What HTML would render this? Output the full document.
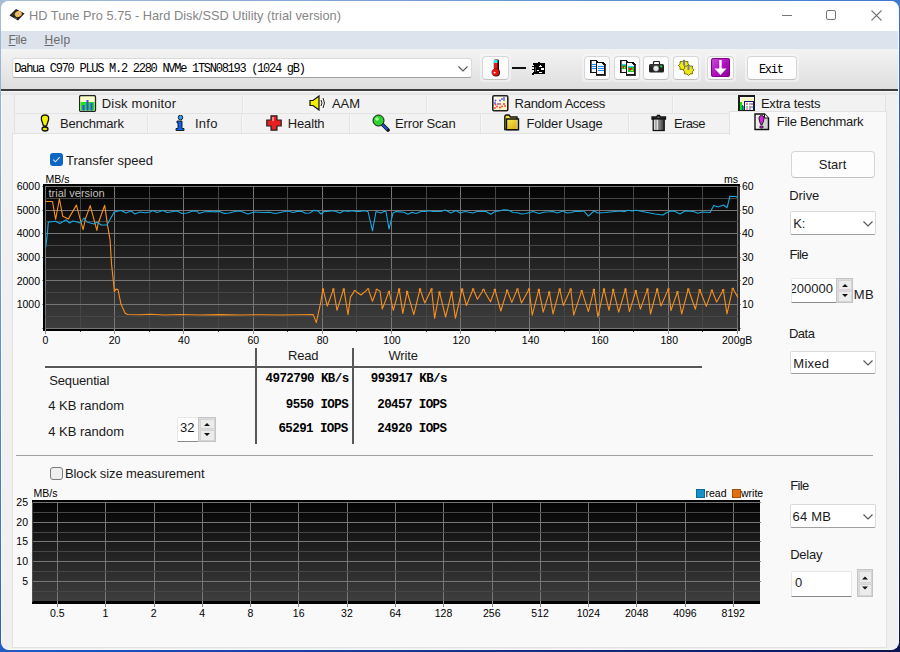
<!DOCTYPE html>
<html><head><meta charset="utf-8">
<style>
*{margin:0;padding:0;box-sizing:border-box}
html,body{width:900px;height:652px;overflow:hidden}
body{background:linear-gradient(150deg,#a8bed6 0%,#3a78d0 45%,#1a50c0 60%,#0a1450 100%);font-family:"Liberation Sans",sans-serif;position:relative}
.abs{position:absolute}
.lbl{white-space:nowrap;line-height:1.2}
.win{position:absolute;left:1px;top:1px;width:898px;height:649px;background:#f0f0f0;border-radius:8px;overflow:hidden;border:1px solid #fafafa;border-top:none}
.combo{position:absolute;background:#fff;border:1px solid #dadada;border-bottom-color:#a0a0a0;border-radius:3px}
.btn{position:absolute;background:#fdfdfd;border:1px solid #d6d6d6;border-bottom-color:#c0c0c0;border-radius:4px}
</style></head><body>
<div class="win"></div>
<div class="abs" style="left:1px;top:1px;width:897px;height:30px;background:#fff;border-radius:8px 8px 0 0"></div>
<svg class="abs" style="left:9px;top:7px" width="16" height="15" viewBox="0 0 16 15">
<path d="M0.5 8.5 L7 2 L15.5 6.5 L9 13.5 Z" fill="#1a1a1a"/><path d="M2 8.3 L7 3.2 L9.5 4.5 L4.5 10Z" fill="#2e2e2e"/>
<ellipse cx="9.3" cy="7" rx="3.6" ry="3" fill="#f2b24a" transform="rotate(-30 9.3 7)"/><ellipse cx="9.3" cy="7" rx="2" ry="1.6" fill="#f8cc78" transform="rotate(-30 9.3 7)"/><circle cx="9.3" cy="6.9" r="0.9" fill="#9aa0c0"/>
<path d="M5 10.5 L8 12" stroke="#777" stroke-width="1"/></svg>
<div class="abs" style="left:782px;top:15px;width:10px;height:1px;background:#777"></div>
<div class="abs" style="left:826px;top:10px;width:10px;height:10px;border:1px solid #777;border-radius:2px"></div>
<svg class="abs" style="left:871px;top:10px" width="11" height="11" viewBox="0 0 11 11"><path d="M0.5 0.5 L10.5 10.5 M10.5 0.5 L0.5 10.5" stroke="#777" stroke-width="1.1"/></svg>
<div class="abs" style="left:1px;top:31px;width:897px;height:18px;background:#dde3ec"></div>
<div class="abs" style="left:1px;top:49px;width:897px;height:40px;background:linear-gradient(#f3f3f3,#dedede)"></div>
<div class="abs" style="left:1px;top:89px;width:897px;height:2px;background:#3c3c3c"></div>
<div class="abs" style="left:1px;top:91px;width:897px;height:1px;background:#fafafa"></div>
<div class="combo" style="left:12px;top:58px;width:460px;height:20px"></div>
<svg class="abs" style="left:458px;top:66px" width="10" height="6" viewBox="0 0 10 6"><path d="M0.5 0.5 L5 5 L9.5 0.5" fill="none" stroke="#555" stroke-width="1.1"/></svg>
<div class="abs" style="left:480px;top:54px;width:31px;height:28px;background:rgba(250,250,250,0.45);border-radius:3px"></div><div class="btn" style="left:482px;top:56px;width:27px;height:24px"></div>
<div class="abs" style="left:582px;top:54px;width:30px;height:28px;background:rgba(250,250,250,0.45);border-radius:3px"></div><div class="btn" style="left:584px;top:56px;width:26px;height:24px"></div>
<div class="abs" style="left:612px;top:54px;width:30px;height:28px;background:rgba(250,250,250,0.45);border-radius:3px"></div><div class="btn" style="left:614px;top:56px;width:26px;height:24px"></div>
<div class="abs" style="left:641px;top:54px;width:30px;height:28px;background:rgba(250,250,250,0.45);border-radius:3px"></div><div class="btn" style="left:643px;top:56px;width:26px;height:24px"></div>
<div class="abs" style="left:671px;top:54px;width:30px;height:28px;background:rgba(250,250,250,0.45);border-radius:3px"></div><div class="btn" style="left:673px;top:56px;width:26px;height:24px"></div>
<div class="abs" style="left:705px;top:54px;width:31px;height:28px;background:rgba(250,250,250,0.45);border-radius:3px"></div><div class="btn" style="left:707px;top:56px;width:27px;height:24px"></div>
<div class="abs" style="left:745px;top:54px;width:54px;height:28px;background:rgba(250,250,250,0.45);border-radius:3px"></div><div class="btn" style="left:747px;top:56px;width:50px;height:24px"></div>
<svg class="abs" style="left:490px;top:58px" width="12" height="20" viewBox="0 0 12 20">
<rect x="4" y="1.5" width="5" height="13" rx="1.2" fill="#111"/><rect x="4" y="2" width="3.5" height="3" fill="#30e8f0"/><rect x="4" y="5" width="3.5" height="9" fill="#ee1414"/>
<circle cx="6" cy="14.6" r="4" fill="#111"/><circle cx="5.5" cy="14.2" r="3.5" fill="#ee1010"/><circle cx="4.6" cy="14.6" r="0.9" fill="#fff"/><path d="M1.6 12.5 V16" stroke="#50d0e0" stroke-width="0.9"/><path d="M3.5 2.5 V10.5" stroke="#60d8e8" stroke-width="0.7"/></svg>
<div class="abs" style="left:512px;top:67px;width:14px;height:1.5px;background:#111"></div>
<svg class="abs" style="left:532px;top:62px" width="14" height="13" viewBox="0 0 14 13" shape-rendering="crispEdges">
<path d="M6 0 H8 V1 H13 V3 L12 4 L13 5 V6 L12 7 L13 8 V9 L12 10 L13 11 V12 H3 L2 12.5 H0 V11 L1 10 L2 9 V3 H1 V1 H6Z" fill="#000"/>
<rect x="0" y="3.5" width="1.5" height="1.5" fill="#000"/><rect x="0" y="6.5" width="1.5" height="1.5" fill="#000"/>
<path d="M6.5 4.5 L8 3 L9.5 4.5Z" fill="#fff"/><rect x="8.5" y="6" width="3" height="1.5" fill="#fff"/><rect x="5" y="8" width="2" height="1.2" fill="#fff"/><rect x="7" y="10" width="3" height="1" fill="#fff"/><rect x="3" y="5" width="1" height="5" fill="#444"/>
</svg>
<svg class="abs" style="left:590px;top:59px" width="17" height="18" viewBox="0 0 17 18" shape-rendering="crispEdges"><path d="M0 1 H6 L8 3 V14 H0Z" fill="#111"/><path d="M2 2 H6 V3 H7 V13 H2Z" fill="#f6f6f6"/><rect x="1" y="2" width="1" height="11" fill="#606060"/><path d="M6 3 H13 L16 6 V17 H6Z" fill="#111"/><path d="M7 4 H12 V5 H13 V6 H14 V15 H7Z" fill="#f6f6f6"/><rect x="15" y="6" width="1" height="11" fill="#444"/><rect x="6" y="16" width="10" height="1" fill="#333"/><g fill="#1a8cff"><rect x="2" y="5" width="4" height="1"/><rect x="2" y="7" width="4" height="1"/><rect x="2" y="9" width="4" height="1"/><rect x="8" y="7" width="6" height="1"/><rect x="8" y="9" width="6" height="1"/><rect x="8" y="11" width="6" height="1"/></g></svg>
<svg class="abs" style="left:620px;top:59px" width="17" height="18" viewBox="0 0 17 18" shape-rendering="crispEdges"><path d="M0 1 H6 L8 3 V14 H0Z" fill="#111"/><path d="M2 2 H6 V3 H7 V13 H2Z" fill="#f6f6f6"/><rect x="1" y="2" width="1" height="11" fill="#606060"/><path d="M6 3 H13 L16 6 V17 H6Z" fill="#111"/><path d="M7 4 H12 V5 H13 V6 H14 V15 H7Z" fill="#f6f6f6"/><rect x="15" y="6" width="1" height="11" fill="#444"/><rect x="6" y="16" width="10" height="1" fill="#333"/><rect x="2" y="5" width="4" height="1" fill="#30d0f0"/><rect x="2" y="6" width="4" height="4" fill="#20c030"/><rect x="3" y="7" width="2" height="2" fill="#e02010"/><rect x="4" y="8" width="1" height="1" fill="#f0e020"/><rect x="8" y="7" width="6" height="1" fill="#30d0f0"/><rect x="8" y="8" width="6" height="5" fill="#20c030"/><rect x="9" y="9" width="3" height="2" fill="#e02010"/><rect x="11" y="11" width="2" height="1" fill="#f0e020"/></svg>
<svg class="abs" style="left:649px;top:61px" width="16" height="12" viewBox="0 0 16 12">
<path d="M4.5 3.5 V1.5 Q4.5 0.5 5.5 0.5 H9.5 Q10.5 0.5 10.5 1.5 V3.5" fill="none" stroke="#222" stroke-width="1.2"/>
<rect x="0" y="3" width="15" height="8.5" rx="1.5" fill="#222"/><rect x="0.8" y="3.6" width="13.4" height="2" rx="1" fill="#3a3a3a"/>
<circle cx="7" cy="7.5" r="3" fill="#888"/><circle cx="7" cy="7.5" r="2.4" fill="#e8e8e8"/><circle cx="12.2" cy="5.5" r="1.1" fill="#10e030"/></svg>
<svg class="abs" style="left:678px;top:59px" width="17" height="17" viewBox="0 0 17 17">
<path d="M11.60 6.50 L9.88 8.11 L9.96 10.46 L7.61 10.38 L6.00 12.10 L4.39 10.38 L2.04 10.46 L2.12 8.11 L0.40 6.50 L2.12 4.89 L2.04 2.54 L4.39 2.62 L6.00 0.90 L7.61 2.62 L9.96 2.54 L9.88 4.89Z" fill="#f0e818" stroke="#6a6400" stroke-width="0.9"/><path d="M16.10 11.00 L14.38 12.61 L14.46 14.96 L12.11 14.88 L10.50 16.60 L8.89 14.88 L6.54 14.96 L6.62 12.61 L4.90 11.00 L6.62 9.39 L6.54 7.04 L8.89 7.12 L10.50 5.40 L12.11 7.12 L14.46 7.04 L14.38 9.39Z" fill="#f0e818" stroke="#6a6400" stroke-width="0.9"/>
<rect x="5" y="1.5" width="2" height="5" fill="#7080a0"/><rect x="9.5" y="6" width="2" height="5" fill="#7080a0"/></svg>
<svg class="abs" style="left:711px;top:58px" width="19" height="19" viewBox="0 0 19 19">
<defs><linearGradient id="pg" x1="0" y1="0" x2="1" y2="1"><stop offset="0" stop-color="#d050e0"/><stop offset="0.5" stop-color="#b010c0"/><stop offset="1" stop-color="#8a0098"/></linearGradient></defs>
<rect x="0" y="0" width="19" height="19" rx="2" fill="url(#pg)"/><rect x="0.5" y="0.5" width="18" height="18" rx="2" fill="none" stroke="#800088" stroke-width="1"/>
<rect x="8.3" y="2" width="2.4" height="11" fill="#fff"/><path d="M3.5 10.5 H15.5 L9.5 17Z" fill="#fff"/></svg>
<div class="abs" style="left:1px;top:92px;width:897px;height:3px;background:#e9e9e9"></div>
<div class="abs" style="left:14px;top:94px;width:872px;height:20px;background:#f2f2f2;border:1px solid #e3e3e3"></div>
<div class="abs" style="left:14px;top:113px;width:716px;height:21px;background:#f2f2f2;border:1px solid #e3e3e3"></div>
<div class="abs" style="left:242px;top:95px;width:1px;height:18px;background:#e3e3e3"></div>
<div class="abs" style="left:243px;top:95px;width:1px;height:18px;background:#f8f8f8"></div>
<div class="abs" style="left:426px;top:95px;width:1px;height:18px;background:#e3e3e3"></div>
<div class="abs" style="left:427px;top:95px;width:1px;height:18px;background:#f8f8f8"></div>
<div class="abs" style="left:672px;top:95px;width:1px;height:18px;background:#e3e3e3"></div>
<div class="abs" style="left:673px;top:95px;width:1px;height:18px;background:#f8f8f8"></div>
<div class="abs" style="left:147px;top:114px;width:1px;height:19px;background:#e3e3e3"></div>
<div class="abs" style="left:148px;top:114px;width:1px;height:19px;background:#f8f8f8"></div>
<div class="abs" style="left:241px;top:114px;width:1px;height:19px;background:#e3e3e3"></div>
<div class="abs" style="left:242px;top:114px;width:1px;height:19px;background:#f8f8f8"></div>
<div class="abs" style="left:349px;top:114px;width:1px;height:19px;background:#e3e3e3"></div>
<div class="abs" style="left:350px;top:114px;width:1px;height:19px;background:#f8f8f8"></div>
<div class="abs" style="left:480px;top:114px;width:1px;height:19px;background:#e3e3e3"></div>
<div class="abs" style="left:481px;top:114px;width:1px;height:19px;background:#f8f8f8"></div>
<div class="abs" style="left:628px;top:114px;width:1px;height:19px;background:#e3e3e3"></div>
<div class="abs" style="left:629px;top:114px;width:1px;height:19px;background:#f8f8f8"></div>
<div class="abs" style="left:12px;top:133px;width:875px;height:515px;background:#f9f9f9;border:1px solid #e2e2e2"></div>
<div class="abs" style="left:729px;top:111px;width:158px;height:24px;background:#f9f9f9;border:1px solid #e2e2e2;border-bottom:none"></div>
<svg class="abs" style="left:79px;top:95px" width="18" height="17" viewBox="0 0 18 17">
<rect x="0.5" y="0.5" width="16" height="16" rx="1.5" fill="#ffffc8" stroke="#222" stroke-width="1.3"/>
<rect x="1.5" y="7" width="14" height="8.5" fill="#20e020"/><rect x="3.5" y="10" width="2" height="5.5" fill="#4040ff"/><rect x="7.5" y="5" width="2" height="10.5" fill="#4040ff"/><rect x="11.5" y="8" width="2" height="7.5" fill="#4040ff"/></svg>
<svg class="abs" style="left:309px;top:95px" width="17" height="16" viewBox="0 0 17 16">
<path d="M1 5.5 H4 L10 1 V15 L4 10.5 H1 Z" fill="#f0f000" stroke="#111" stroke-width="1.2"/><path d="M12 5 Q14 8 12 11 M14 3 Q17 8 14 13" fill="none" stroke="#222" stroke-width="1"/></svg>
<svg class="abs" style="left:492px;top:95px" width="17" height="17" viewBox="0 0 17 17">
<defs><linearGradient id="rag" x1="0" y1="0" x2="1" y2="1"><stop offset="0" stop-color="#ffffff"/><stop offset="1" stop-color="#f8f0b0"/></linearGradient></defs>
<rect x="0.8" y="0.8" width="15" height="15" rx="1.2" fill="url(#rag)" stroke="#222" stroke-width="1.6"/>
<g fill="#ff3030"><circle cx="3" cy="13" r="0.9"/><circle cx="3.5" cy="9.5" r="0.9"/><circle cx="5" cy="11.5" r="0.9"/><circle cx="8" cy="12.5" r="0.9"/><circle cx="8" cy="9" r="0.9"/><circle cx="10" cy="11.5" r="0.9"/><circle cx="12" cy="9" r="0.9"/><circle cx="13" cy="11" r="0.9"/></g>
<g fill="#5050ff"><circle cx="3" cy="8" r="0.9"/><circle cx="3.5" cy="5.5" r="0.9"/><circle cx="6" cy="9" r="0.9"/><circle cx="8" cy="5.5" r="0.9"/><circle cx="10" cy="4" r="0.9"/><circle cx="12" cy="3" r="0.9"/><circle cx="12" cy="5" r="0.9"/></g></svg>
<svg class="abs" style="left:738px;top:95px" width="17" height="17" viewBox="0 0 17 17" shape-rendering="crispEdges">
<rect x="0" y="0" width="17" height="16" rx="1" fill="#1a1a1a"/><rect x="1.5" y="1.5" width="14" height="13" fill="#fafac0"/><rect x="1.5" y="1.5" width="14" height="1.5" fill="#fff"/><rect x="1.5" y="1.5" width="1.5" height="13" fill="#fff"/>
<rect x="1.5" y="7" width="2" height="7.5" fill="#10e010"/><rect x="3.5" y="9.5" width="1.5" height="5" fill="#3030ff"/><rect x="5" y="11" width="1" height="3.5" fill="#10c010"/>
<rect x="6" y="5.5" width="9.5" height="9" fill="#1a1a70"/><rect x="7" y="7" width="8" height="7.5" fill="#fff"/>
<rect x="7.5" y="7.5" width="2" height="2" fill="#f08080"/><rect x="10.5" y="7.5" width="2" height="2" fill="#80c0f0"/><rect x="13" y="7.5" width="2" height="2" fill="#f08080"/>
<rect x="7.5" y="10.5" width="2" height="2" fill="#80e080"/><rect x="10.5" y="10.5" width="2" height="2" fill="#f08080"/><rect x="13" y="10.5" width="2" height="2" fill="#80c0f0"/>
<rect x="7.5" y="13" width="2" height="1.5" fill="#f0a0a0"/><rect x="10.5" y="13" width="2" height="1.5" fill="#a0a0f0"/></svg>
<svg class="abs" style="left:40px;top:114px" width="10" height="18" viewBox="0 0 10 18">
<path d="M5 1 C8.5 1 9 3 8.5 6 L6.5 12 H3.5 L1.5 6 C1 3 1.5 1 5 1Z" fill="#f0f000" stroke="#111" stroke-width="1.3"/><ellipse cx="5" cy="15" rx="3" ry="2" fill="#e8e800" stroke="#111" stroke-width="1.3"/></svg>
<svg class="abs" style="left:175px;top:115px" width="10" height="16" viewBox="0 0 10 16">
<circle cx="5.5" cy="2.5" r="2.3" fill="#30a0ff" stroke="#111" stroke-width="0.9"/><path d="M2 6 H7 V13.5 H9 V15.5 H1 V13.5 H3 V8 H2 Z" fill="#1060f0" stroke="#111" stroke-width="0.9"/></svg>
<svg class="abs" style="left:266px;top:115px" width="16" height="16" viewBox="0 0 16 16">
<path d="M5 0.8 H11 V5 H15.2 V11 H11 V15.2 H5 V11 H0.8 V5 H5 Z" fill="#e82020" stroke="#222" stroke-width="1.2"/><path d="M6 2 H8 V6 H6Z" fill="#ff8080"/></svg>
<svg class="abs" style="left:372px;top:114px" width="18" height="18" viewBox="0 0 18 18">
<path d="M9 9 L16 16" stroke="#111" stroke-width="3.6" stroke-linecap="round"/><path d="M9.5 9.5 L15.5 15.5" stroke="#2050d0" stroke-width="2"/>
<circle cx="6.5" cy="6.5" r="5.5" fill="#30d030" stroke="#111" stroke-width="1"/><circle cx="5" cy="5" r="1.8" fill="#a0ffa0"/></svg>
<svg class="abs" style="left:504px;top:114px" width="16" height="17" viewBox="0 0 16 17">
<defs><linearGradient id="fg" x1="0" y1="0" x2="1" y2="1"><stop offset="0" stop-color="#fff060"/><stop offset="1" stop-color="#d0a000"/></linearGradient></defs>
<path d="M0.8 3 Q0.8 1 2.5 1 H5 L6.5 3 H13 V15.5 H0.8Z" fill="#f0e040" stroke="#111" stroke-width="1.4"/>
<path d="M2.5 5 H14.5 V15.8 H2.5Z" fill="url(#fg)" stroke="#111" stroke-width="1.4"/><rect x="12.3" y="6" width="1" height="9" fill="#c8c8c8"/></svg>
<svg class="abs" style="left:651px;top:114px" width="16" height="18" viewBox="0 0 16 18">
<defs><linearGradient id="tg" x1="0" y1="0" x2="1" y2="0"><stop offset="0" stop-color="#d0d0d0"/><stop offset="0.35" stop-color="#f0f0f0"/><stop offset="0.6" stop-color="#808080"/><stop offset="1" stop-color="#303030"/></linearGradient></defs>
<path d="M1 3 H5.5 L6.5 1.5 H8.5 L9.5 3 H14.5 V5 H1Z" fill="#555" stroke="#111" stroke-width="1.3"/>
<rect x="2.2" y="5" width="11" height="11.5" fill="url(#tg)" stroke="#111" stroke-width="1.3"/>
<path d="M5 6 V15.5 M8 6 V15.5 M11 6 V15.5" stroke="#555" stroke-width="0.8"/></svg>
<svg class="abs" style="left:754px;top:113px" width="16" height="18" viewBox="0 0 16 18">
<defs><linearGradient id="fbg" x1="0" y1="0" x2="1" y2="0"><stop offset="0" stop-color="#f4f4f4"/><stop offset="1" stop-color="#c8c8c8"/></linearGradient></defs>
<path d="M1 1 H10.5 L14.5 5 V16.5 H1 Z" fill="url(#fbg)" stroke="#111" stroke-width="1.4"/><path d="M10.5 1 V5 H14.5" fill="#fff" stroke="#111" stroke-width="1"/>
<path d="M7.5 2.5 C10 2.5 10.5 5 9.5 8 L8.3 11.5 H6.7 L5.5 8 C4.5 5 5 2.5 7.5 2.5Z" fill="#e020e0" stroke="#222" stroke-width="1"/>
<ellipse cx="7.5" cy="14" rx="1.8" ry="1.2" fill="#d010d0" stroke="#222" stroke-width="0.8"/></svg>
<div class="abs" style="left:50px;top:153px;width:13px;height:13px;background:#0a66c2;border-radius:3px"></div>
<svg class="abs" style="left:50px;top:153px" width="13" height="13" viewBox="0 0 13 13"><path d="M3.2 6.6 L5.4 8.8 L9.8 4.2" fill="none" stroke="#d8e8f8" stroke-width="1.1"/></svg>
<div class="abs" style="left:45px;top:365px;width:657px;height:4px;background:#fff"></div>
<div class="abs" style="left:45px;top:366px;width:657px;height:2px;background:#585858"></div>
<div class="abs" style="left:255px;top:348px;width:2px;height:96px;background:#585858"></div>
<div class="abs" style="left:351.5px;top:348px;width:2px;height:96px;background:#585858"></div>
<div class="abs" style="left:177px;top:417px;width:22px;height:25px;background:#fff;border:1px solid #e8e8e8;border-bottom:1px solid #8a8a8a;border-radius:2px 2px 0 0"></div>
<div class="abs" style="left:198px;top:417px;width:18px;height:25px;background:#dcdcdc;border:1px solid #c4c4c4"></div><div class="abs" style="left:199.5px;top:418.5px;width:15px;height:10.5px;background:#ececec;border:1px solid #d4d4d4"></div><div class="abs" style="left:199.5px;top:430.0px;width:15px;height:10.5px;background:#ececec;border:1px solid #d4d4d4"></div><svg class="abs" style="left:203.0px;top:417px" width="8" height="25" viewBox="0 0 8 25"><path d="M1 9.0 L4 6.0 L7 9.0Z M1 16.0 L4 19.0 L7 16.0Z" fill="#111"/></svg>
<div class="abs" style="left:16px;top:455px;width:857px;height:1px;background:#a0a0a0"></div>
<div class="abs" style="left:50px;top:466.5px;width:13px;height:13px;background:#efefef;border:1px solid #7a7a7a;border-radius:3px"></div>
<div class="abs" style="left:696px;top:489px;width:9px;height:9px;background:#1890c8;border:1px solid #0a6aa0"></div>
<div class="abs" style="left:732px;top:489px;width:9px;height:9px;background:#e07010;border:1px solid #a05008"></div>
<div class="btn" style="left:791px;top:151px;width:84px;height:27px;background:#fdfdfd"></div>
<div class="combo" style="left:790px;top:211px;width:86px;height:24px;border-radius:2px"></div><svg class="abs" style="left:863.0px;top:220.5px" width="10" height="6" viewBox="0 0 10 6"><path d="M0.5 0.5 L5 5 L9.5 0.5" fill="none" stroke="#555" stroke-width="1.1"/></svg>
<div class="abs" style="left:791px;top:278px;width:46px;height:25px;background:#fff;border:1px solid #e8e8e8;border-bottom:1px solid #8a8a8a;border-radius:2px 2px 0 0"></div>
<div class="abs" style="left:836px;top:278px;width:17px;height:25px;background:#dcdcdc;border:1px solid #c4c4c4"></div><div class="abs" style="left:837.5px;top:279.5px;width:14px;height:10.5px;background:#ececec;border:1px solid #d4d4d4"></div><div class="abs" style="left:837.5px;top:291.0px;width:14px;height:10.5px;background:#ececec;border:1px solid #d4d4d4"></div><svg class="abs" style="left:840.5px;top:278px" width="8" height="25" viewBox="0 0 8 25"><path d="M1 9.0 L4 6.0 L7 9.0Z M1 16.0 L4 19.0 L7 16.0Z" fill="#111"/></svg>
<div class="combo" style="left:790px;top:351px;width:86px;height:23px;border-radius:2px"></div><svg class="abs" style="left:863.0px;top:360.0px" width="10" height="6" viewBox="0 0 10 6"><path d="M0.5 0.5 L5 5 L9.5 0.5" fill="none" stroke="#555" stroke-width="1.1"/></svg>
<div class="combo" style="left:790px;top:504px;width:86px;height:24px;border-radius:2px"></div><svg class="abs" style="left:863.0px;top:513.5px" width="10" height="6" viewBox="0 0 10 6"><path d="M0.5 0.5 L5 5 L9.5 0.5" fill="none" stroke="#555" stroke-width="1.1"/></svg>
<div class="abs" style="left:791px;top:571px;width:61px;height:26px;background:#fff;border:1px solid #e8e8e8;border-bottom:1px solid #8a8a8a;border-radius:2px 2px 0 0"></div>
<div class="abs" style="left:857px;top:569px;width:16px;height:28px;background:#dcdcdc;border:1px solid #c4c4c4"></div><div class="abs" style="left:858.5px;top:570.5px;width:13px;height:12.0px;background:#ececec;border:1px solid #d4d4d4"></div><div class="abs" style="left:858.5px;top:583.5px;width:13px;height:12.0px;background:#ececec;border:1px solid #d4d4d4"></div><svg class="abs" style="left:861.0px;top:569px" width="8" height="28" viewBox="0 0 8 28"><path d="M1 10.5 L4 7.5 L7 10.5Z M1 17.5 L4 20.5 L7 17.5Z" fill="#111"/></svg>
<svg class="abs" style="left:0;top:0" width="900" height="652" viewBox="0 0 900 652" shape-rendering="crispEdges">
<defs><linearGradient id="g1" x1="0" y1="0" x2="0" y2="1"><stop offset="0" stop-color="#030303"/><stop offset="1" stop-color="#3e3e3e"/></linearGradient><linearGradient id="g2" x1="0" y1="0" x2="0" y2="1"><stop offset="0" stop-color="#030303"/><stop offset="1" stop-color="#3e3e3e"/></linearGradient></defs>
<rect x="43" y="184" width="697" height="147" fill="#000"/>
<rect x="45" y="186" width="694" height="143" fill="url(#g1)"/>
<rect x="738" y="186" width="2" height="145" fill="#2a2a2a"/>
<rect x="45" y="186" width="1" height="143" fill="#767676"/>
<rect x="80" y="186" width="1" height="143" fill="#464646"/>
<rect x="114" y="186" width="1" height="143" fill="#767676"/>
<rect x="149" y="186" width="1" height="143" fill="#464646"/>
<rect x="183" y="186" width="1" height="143" fill="#767676"/>
<rect x="218" y="186" width="1" height="143" fill="#464646"/>
<rect x="253" y="186" width="1" height="143" fill="#767676"/>
<rect x="287" y="186" width="1" height="143" fill="#464646"/>
<rect x="322" y="186" width="1" height="143" fill="#767676"/>
<rect x="356" y="186" width="1" height="143" fill="#464646"/>
<rect x="391" y="186" width="1" height="143" fill="#767676"/>
<rect x="426" y="186" width="1" height="143" fill="#464646"/>
<rect x="460" y="186" width="1" height="143" fill="#767676"/>
<rect x="495" y="186" width="1" height="143" fill="#464646"/>
<rect x="529" y="186" width="1" height="143" fill="#767676"/>
<rect x="564" y="186" width="1" height="143" fill="#464646"/>
<rect x="599" y="186" width="1" height="143" fill="#767676"/>
<rect x="633" y="186" width="1" height="143" fill="#464646"/>
<rect x="668" y="186" width="1" height="143" fill="#767676"/>
<rect x="702" y="186" width="1" height="143" fill="#464646"/>
<rect x="737" y="186" width="1" height="143" fill="#767676"/>
<rect x="45" y="186" width="693" height="1" fill="#767676"/>
<rect x="45" y="198" width="693" height="1" fill="#464646"/>
<rect x="45" y="210" width="693" height="1" fill="#767676"/>
<rect x="45" y="221" width="693" height="1" fill="#464646"/>
<rect x="45" y="233" width="693" height="1" fill="#767676"/>
<rect x="45" y="245" width="693" height="1" fill="#464646"/>
<rect x="45" y="257" width="693" height="1" fill="#767676"/>
<rect x="45" y="269" width="693" height="1" fill="#464646"/>
<rect x="45" y="280" width="693" height="1" fill="#767676"/>
<rect x="45" y="292" width="693" height="1" fill="#464646"/>
<rect x="45" y="304" width="693" height="1" fill="#767676"/>
<rect x="45" y="316" width="693" height="1" fill="#464646"/>
<rect x="45" y="328" width="693" height="1" fill="#767676"/>
<rect x="42" y="186" width="1" height="1" fill="#909090"/>
<rect x="740" y="186" width="1" height="1" fill="#909090"/>
<rect x="42" y="210" width="1" height="1" fill="#909090"/>
<rect x="740" y="210" width="1" height="1" fill="#909090"/>
<rect x="42" y="233" width="1" height="1" fill="#909090"/>
<rect x="740" y="233" width="1" height="1" fill="#909090"/>
<rect x="42" y="257" width="1" height="1" fill="#909090"/>
<rect x="740" y="257" width="1" height="1" fill="#909090"/>
<rect x="42" y="280" width="1" height="1" fill="#909090"/>
<rect x="740" y="280" width="1" height="1" fill="#909090"/>
<rect x="42" y="304" width="1" height="1" fill="#909090"/>
<rect x="740" y="304" width="1" height="1" fill="#909090"/>
<rect x="42" y="328" width="1" height="1" fill="#909090"/>
<rect x="740" y="328" width="1" height="1" fill="#909090"/>
<rect x="45" y="329" width="1" height="5" fill="#909090"/>
<rect x="80" y="331" width="1" height="1" fill="#404040"/>
<rect x="114" y="329" width="1" height="5" fill="#909090"/>
<rect x="149" y="331" width="1" height="1" fill="#404040"/>
<rect x="183" y="329" width="1" height="5" fill="#909090"/>
<rect x="218" y="331" width="1" height="1" fill="#404040"/>
<rect x="253" y="329" width="1" height="5" fill="#909090"/>
<rect x="287" y="331" width="1" height="1" fill="#404040"/>
<rect x="322" y="329" width="1" height="5" fill="#909090"/>
<rect x="356" y="331" width="1" height="1" fill="#404040"/>
<rect x="391" y="329" width="1" height="5" fill="#909090"/>
<rect x="426" y="331" width="1" height="1" fill="#404040"/>
<rect x="460" y="329" width="1" height="5" fill="#909090"/>
<rect x="495" y="331" width="1" height="1" fill="#404040"/>
<rect x="529" y="329" width="1" height="5" fill="#909090"/>
<rect x="564" y="331" width="1" height="1" fill="#404040"/>
<rect x="599" y="329" width="1" height="5" fill="#909090"/>
<rect x="633" y="331" width="1" height="1" fill="#404040"/>
<rect x="668" y="329" width="1" height="5" fill="#909090"/>
<rect x="702" y="331" width="1" height="1" fill="#404040"/>
<rect x="737" y="329" width="1" height="5" fill="#909090"/>
</svg>
<svg class="abs" style="left:0;top:0" width="900" height="652" viewBox="0 0 900 652">
<text x="48.5" y="196.5" fill="#c4bfb6" font-size="11" font-family="Liberation Sans">trial version</text>
<path d="M45.5 201.5 L52.5 201.5 L55.6 219.3 L59.4 198.9 L62.7 216.2 L68.4 218.9 L76.4 205.1 L83.1 229.6 L85.3 219.3 L90.2 205.6 L96.9 230.4 L98 224 L104.7 205.3 L107.6 225.6 L110.1 240.2 L111.5 263.8 L113.5 282.4 L114.3 291.7 L116 289.1 L118 289.5 L121 304.3 L125.3 313.6 L128 314.5 L140 314.8 L150 314.3 L165 315 L180 314.5 L200 315 L220 314.6 L240 315 L260 314.7 L280 315 L300 314.7 L313.2 314.6 L316.3 322.6 L320.6 303 L322.6 291.2 L322.4 288.8 L323.6 288.8 L323.5 291.1 L327.3 306 L332.7 291.1 L332.8 288.8 L334 288.8 L333.8 291.2 L337 310.3 L343.1 291.1 L343.2 288.8 L344.4 288.8 L344.2 291.2 L348 314.6 L350.5 296.9 L353.5 292.6 L354.2 290.6 L355.4 290.6 L356.6 292 L360.9 295 L366.5 290.4 L367.6 288.8 L368.8 288.8 L368.9 291.1 L372.5 301.2 L376 291.7 L376.2 289.4 L377.4 289.4 L378.2 290.2 L380 291 L382.3 309.1 L388.2 293.5 L388.4 291.2 L389.6 291.2 L389.5 293.5 L393.3 310.3 L398.6 291.1 L398.6 288.8 L399.8 288.8 L399.5 291.2 L402.8 313.4 L406.7 293.6 L406.5 291.2 L407.7 291.2 L407.7 293.5 L413.8 314.6 L419.5 291.1 L419.4 288.8 L420.6 288.8 L420.7 291.1 L424.8 303 L430.6 291 L431 288.8 L432.2 288.8 L431.8 291.2 L434.6 318.3 L439.1 294.2 L438.9 291.8 L440.1 291.8 L440 294.1 L445.6 317 L451.2 294.1 L451.1 291.8 L452.3 291.8 L452 294.2 L455.4 318.3 L461.6 291.1 L461.5 288.8 L462.7 288.8 L462.7 291.1 L466.4 305.5 L472.3 291 L472.5 288.8 L473.7 288.8 L473.9 291 L477.4 299.3 L482.3 291.5 L482.9 289.4 L484.1 289.4 L484.6 291.5 L490.5 301.8 L494.2 291.7 L494.3 289.4 L495.5 289.4 L495.5 291.7 L500.8 311 L506.5 292.3 L506.5 290 L507.7 290 L507.9 292.3 L511.8 302.4 L516.6 291 L516.9 288.8 L518.1 288.8 L518.1 291.1 L521.5 303 L528.1 290.9 L528.5 288.8 L529.7 288.8 L529.4 291.2 L532.2 315.2 L538.3 291.7 L538.3 289.4 L539.5 289.4 L539.3 291.8 L543.2 312.2 L548.7 294.1 L548.7 291.8 L549.9 291.8 L549.7 294.2 L553 314 L559.1 291.1 L559.1 288.8 L560.3 288.8 L560.2 291.1 L563.3 305.5 L569.8 291 L570.1 288.8 L571.3 288.8 L571 291.2 L573.7 315.2 L581 292.9 L581.1 290.6 L582.3 290.6 L582.4 292.9 L588.4 311.6 L593.4 291.7 L593.3 289.4 L594.5 289.4 L594.2 291.8 L597.9 317 L603.5 291.1 L603.4 288.8 L604.6 288.8 L604.5 291.1 L609 310.3 L612.8 291.8 L612.6 289.4 L613.8 289.4 L613.7 291.7 L618.7 312.2 L624.9 291.1 L624.9 288.8 L626.1 288.8 L625.9 291.2 L629.4 311.6 L635.2 292.9 L635.2 290.6 L636.4 290.6 L636.3 292.9 L640.4 309.1 L646.8 291.1 L646.9 288.8 L648.1 288.8 L647.8 291.2 L650.5 314 L656.6 291.1 L656.6 288.8 L657.8 288.8 L657.7 291.1 L660.9 306 L667.6 290.9 L667.9 288.7 L669.1 288.7 L668.7 291.1 L670.9 310.6 L676.8 293.8 L676.9 291.5 L678.1 291.5 L677.9 293.9 L681.7 313.9 L687.7 291 L687.7 288.7 L688.9 288.7 L689 291 L695.4 309.2 L699.2 291.9 L699.1 289.6 L700.3 289.6 L700.5 291.8 L706.3 306.4 L711.2 292.4 L711.3 290.1 L712.5 290.1 L712.7 292.3 L716.7 302.1 L722.3 291.7 L722.7 289.6 L723.9 289.6 L723.6 292 L727 313.9 L732.2 290.5 L732.1 288.2 L733.3 288.2 L733.8 290.3 L737.9 297.4" fill="none" stroke="#f7901e" stroke-width="1.1" stroke-linejoin="round"/>
<path d="M45.7 247.4 L46.4 242.3 L47.5 232 L48.3 222.1 L50 222 L55.6 221.2 L59.8 223.5 L66.2 219.8 L69.4 223 L73 221 L77 222 L80 223 L84 218 L87 222 L94 224 L97 222 L101 225 L107 225 L114.2 212 L121 210.5 L126 213 L131 211 L135 214 L140 212 L145 212.8 L150 212 L153 210.5 L157 212.5 L163 210.5 L167 212.5 L172 211.8 L177 211 L182 213.5 L187 213 L192 211.2 L197 211 L199 213.5 L204.5 211.7 L210 211.5 L214.8 211.9 L219.5 211.4 L224.2 213.4 L229 213 L235 211.5 L240 211 L248 214 L254 212 L259 212.2 L264 212.5 L269.5 212.2 L275 213.5 L279.3 212.7 L283.7 211.8 L288 211 L293 212.5 L297.2 211.4 L301.3 211.2 L305.5 213.2 L309.7 213 L313.8 210.4 L318 211 L321 214 L324 211.5 L328 211.5 L332 210.7 L336 211.5 L340 213 L344 210.7 L348 211.5 L352 210.7 L356 211.5 L360 211.5 L364 210.7 L368 211.5 L372.5 230.8 L376 211.5 L381 213 L384 211.5 L386 211.5 L389 229 L393 213 L396 211.5 L400 211.9 L404 212.3 L408 214.2 L412 212.3 L416 213.5 L421 211.5 L425 211.5 L429 210.7 L433 211.5 L437 211.5 L441 211.5 L445 210 L451 213 L456 210.5 L460 213 L465 211.5 L469 212.3 L473 213 L477 211.5 L481 211.5 L486 211.5 L490.8 214.2 L495 211.5 L499.3 211 L503.7 209.7 L508 210 L513 212.5 L517.3 212.8 L521.7 214 L526 213.5 L533 211.5 L539 213.5 L545 212 L549 211.8 L553 211.5 L557 213 L563 211 L567 213 L571.2 212.5 L575.5 211.2 L579.8 211.5 L584 211 L588.3 216.1 L594 211 L598 213 L605 212.5 L610 212 L615 211.5 L620 211 L624 211.8 L628 210.2 L632 211 L636 210.2 L640 211 L655 214 L659 214.5 L663 215 L666 213 L670 211.2 L674 211 L680 214 L685 211 L689.2 211.2 L693.5 211.5 L697.8 213.2 L702 212 L710 212.5 L713.8 205.4 L718 207 L723.5 205 L727.1 207.7 L729.9 196.2 L736 196.5 L737.7 197.6" fill="none" stroke="#1aa8e0" stroke-width="1.1" stroke-linejoin="round"/>
</svg>
<svg class="abs" style="left:0;top:0" width="900" height="652" viewBox="0 0 900 652" shape-rendering="crispEdges">
<rect x="32" y="500" width="728" height="104" fill="#000"/>
<rect x="33" y="502" width="727" height="99" fill="url(#g2)"/>
<rect x="32" y="502" width="1" height="100" fill="#505050"/>
<rect x="57" y="502" width="1" height="99" fill="#767676"/>
<rect x="57" y="601" width="1" height="6" fill="#8a8a8a"/>
<rect x="105" y="502" width="1" height="99" fill="#767676"/>
<rect x="105" y="601" width="1" height="6" fill="#8a8a8a"/>
<rect x="154" y="502" width="1" height="99" fill="#767676"/>
<rect x="154" y="601" width="1" height="6" fill="#8a8a8a"/>
<rect x="202" y="502" width="1" height="99" fill="#767676"/>
<rect x="202" y="601" width="1" height="6" fill="#8a8a8a"/>
<rect x="250" y="502" width="1" height="99" fill="#767676"/>
<rect x="250" y="601" width="1" height="6" fill="#8a8a8a"/>
<rect x="298" y="502" width="1" height="99" fill="#767676"/>
<rect x="298" y="601" width="1" height="6" fill="#8a8a8a"/>
<rect x="347" y="502" width="1" height="99" fill="#767676"/>
<rect x="347" y="601" width="1" height="6" fill="#8a8a8a"/>
<rect x="395" y="502" width="1" height="99" fill="#767676"/>
<rect x="395" y="601" width="1" height="6" fill="#8a8a8a"/>
<rect x="443" y="502" width="1" height="99" fill="#767676"/>
<rect x="443" y="601" width="1" height="6" fill="#8a8a8a"/>
<rect x="492" y="502" width="1" height="99" fill="#767676"/>
<rect x="492" y="601" width="1" height="6" fill="#8a8a8a"/>
<rect x="540" y="502" width="1" height="99" fill="#767676"/>
<rect x="540" y="601" width="1" height="6" fill="#8a8a8a"/>
<rect x="588" y="502" width="1" height="99" fill="#767676"/>
<rect x="588" y="601" width="1" height="6" fill="#8a8a8a"/>
<rect x="636" y="502" width="1" height="99" fill="#767676"/>
<rect x="636" y="601" width="1" height="6" fill="#8a8a8a"/>
<rect x="685" y="502" width="1" height="99" fill="#767676"/>
<rect x="685" y="601" width="1" height="6" fill="#8a8a8a"/>
<rect x="733" y="502" width="1" height="99" fill="#767676"/>
<rect x="733" y="601" width="1" height="6" fill="#8a8a8a"/>
<rect x="33" y="502" width="727" height="1" fill="#767676"/>
<rect x="760" y="502" width="1" height="1" fill="#909090"/>
<rect x="33" y="512" width="727" height="1" fill="#464646"/>
<rect x="33" y="522" width="727" height="1" fill="#767676"/>
<rect x="760" y="522" width="1" height="1" fill="#909090"/>
<rect x="33" y="532" width="727" height="1" fill="#464646"/>
<rect x="33" y="541" width="727" height="1" fill="#767676"/>
<rect x="760" y="541" width="1" height="1" fill="#909090"/>
<rect x="33" y="551" width="727" height="1" fill="#464646"/>
<rect x="33" y="561" width="727" height="1" fill="#767676"/>
<rect x="760" y="561" width="1" height="1" fill="#909090"/>
<rect x="33" y="571" width="727" height="1" fill="#464646"/>
<rect x="33" y="581" width="727" height="1" fill="#767676"/>
<rect x="760" y="581" width="1" height="1" fill="#909090"/>
<rect x="33" y="591" width="727" height="1" fill="#464646"/>
</svg>
<div class="abs lbl" style="right:860.00px;top:180px;font-size:10.5px;color:#000">6000</div><div class="abs lbl" style="right:860.00px;top:204px;font-size:10.5px;color:#000">5000</div><div class="abs lbl" style="right:860.00px;top:227px;font-size:10.5px;color:#000">4000</div><div class="abs lbl" style="right:860.00px;top:251px;font-size:10.5px;color:#000">3000</div><div class="abs lbl" style="right:860.00px;top:275px;font-size:10.5px;color:#000">2000</div><div class="abs lbl" style="right:860.00px;top:298px;font-size:10.5px;color:#000">1000</div><div class="abs lbl" style="left:742.00px;top:180px;font-size:10.5px;color:#000">60</div><div class="abs lbl" style="left:742.00px;top:204px;font-size:10.5px;color:#000">50</div><div class="abs lbl" style="left:742.00px;top:227px;font-size:10.5px;color:#000">40</div><div class="abs lbl" style="left:742.00px;top:251px;font-size:10.5px;color:#000">30</div><div class="abs lbl" style="left:742.00px;top:275px;font-size:10.5px;color:#000">20</div><div class="abs lbl" style="left:742.00px;top:298px;font-size:10.5px;color:#000">10</div><div class="abs lbl" style="left:-4.70px;width:100px;text-align:center;top:334px;font-size:10.5px;color:#000">0</div><div class="abs lbl" style="left:64.63px;width:100px;text-align:center;top:334px;font-size:10.5px;color:#000">20</div><div class="abs lbl" style="left:133.96px;width:100px;text-align:center;top:334px;font-size:10.5px;color:#000">40</div><div class="abs lbl" style="left:203.29px;width:100px;text-align:center;top:334px;font-size:10.5px;color:#000">60</div><div class="abs lbl" style="left:272.62px;width:100px;text-align:center;top:334px;font-size:10.5px;color:#000">80</div><div class="abs lbl" style="left:341.95px;width:100px;text-align:center;top:334px;font-size:10.5px;color:#000">100</div><div class="abs lbl" style="left:411.28px;width:100px;text-align:center;top:334px;font-size:10.5px;color:#000">120</div><div class="abs lbl" style="left:480.61px;width:100px;text-align:center;top:334px;font-size:10.5px;color:#000">140</div><div class="abs lbl" style="left:549.94px;width:100px;text-align:center;top:334px;font-size:10.5px;color:#000">160</div><div class="abs lbl" style="left:619.27px;width:100px;text-align:center;top:334px;font-size:10.5px;color:#000">180</div><div class="abs lbl" style="left:722.00px;top:334px;font-size:10.5px;color:#000">200gB</div><div class="abs lbl" style="left:45.50px;top:173px;font-size:10.5px;color:#000">MB/s</div><div class="abs lbl" style="left:724.00px;top:173px;font-size:10.5px;color:#000">ms</div><div class="abs lbl" style="right:872.00px;top:496px;font-size:10.5px;color:#000">25</div><div class="abs lbl" style="right:872.00px;top:516px;font-size:10.5px;color:#000">20</div><div class="abs lbl" style="right:872.00px;top:535px;font-size:10.5px;color:#000">15</div><div class="abs lbl" style="right:872.00px;top:555px;font-size:10.5px;color:#000">10</div><div class="abs lbl" style="right:872.00px;top:575px;font-size:10.5px;color:#000">5</div><div class="abs lbl" style="left:7.20px;width:100px;text-align:center;top:607px;font-size:10.5px;color:#000">0.5</div><div class="abs lbl" style="left:55.49px;width:100px;text-align:center;top:607px;font-size:10.5px;color:#000">1</div><div class="abs lbl" style="left:103.78px;width:100px;text-align:center;top:607px;font-size:10.5px;color:#000">2</div><div class="abs lbl" style="left:152.07px;width:100px;text-align:center;top:607px;font-size:10.5px;color:#000">4</div><div class="abs lbl" style="left:200.36px;width:100px;text-align:center;top:607px;font-size:10.5px;color:#000">8</div><div class="abs lbl" style="left:248.65px;width:100px;text-align:center;top:607px;font-size:10.5px;color:#000">16</div><div class="abs lbl" style="left:296.94px;width:100px;text-align:center;top:607px;font-size:10.5px;color:#000">32</div><div class="abs lbl" style="left:345.23px;width:100px;text-align:center;top:607px;font-size:10.5px;color:#000">64</div><div class="abs lbl" style="left:393.52px;width:100px;text-align:center;top:607px;font-size:10.5px;color:#000">128</div><div class="abs lbl" style="left:441.81px;width:100px;text-align:center;top:607px;font-size:10.5px;color:#000">256</div><div class="abs lbl" style="left:490.10px;width:100px;text-align:center;top:607px;font-size:10.5px;color:#000">512</div><div class="abs lbl" style="left:538.39px;width:100px;text-align:center;top:607px;font-size:10.5px;color:#000">1024</div><div class="abs lbl" style="left:586.68px;width:100px;text-align:center;top:607px;font-size:10.5px;color:#000">2048</div><div class="abs lbl" style="left:634.97px;width:100px;text-align:center;top:607px;font-size:10.5px;color:#000">4096</div><div class="abs lbl" style="left:683.26px;width:100px;text-align:center;top:607px;font-size:10.5px;color:#000">8192</div><div class="abs lbl" style="left:33.50px;top:487px;font-size:10.5px;color:#000">MB/s</div><div class="abs lbl" style="left:705.50px;top:487px;font-size:10.5px;color:#000">read</div><div class="abs lbl" style="left:741.00px;top:487px;font-size:10.5px;color:#000">write</div>
<div class="abs lbl" style="left:29.00px;top:8px;font-size:12.8px;color:#868686;letter-spacing:-0.005px;">HD Tune Pro 5.75 - Hard Disk/SSD Utility (trial version)</div>
<div class="abs lbl" style="left:8.50px;top:33px;font-size:12px;color:#6a6a6a;letter-spacing:-0.333px;"><u>F</u>ile</div>
<div class="abs lbl" style="left:44.50px;top:33px;font-size:12px;color:#6a6a6a;letter-spacing:0.350px;"><u>H</u>elp</div>
<div class="abs lbl" style="left:101.80px;top:96px;font-size:13px;color:#1a1a1a;letter-spacing:0.182px;">Disk monitor</div>
<div class="abs lbl" style="left:331.90px;top:96px;font-size:13px;color:#1a1a1a;letter-spacing:0.000px;">AAM</div>
<div class="abs lbl" style="left:514.60px;top:96px;font-size:13px;color:#1a1a1a;letter-spacing:-0.275px;">Random Access</div>
<div class="abs lbl" style="left:760.90px;top:96px;font-size:13px;color:#1a1a1a;letter-spacing:-0.190px;">Extra tests</div>
<div class="abs lbl" style="left:60.00px;top:116px;font-size:13px;color:#1a1a1a;letter-spacing:-0.225px;">Benchmark</div>
<div class="abs lbl" style="left:194.90px;top:116px;font-size:13px;color:#1a1a1a;letter-spacing:0.267px;">Info</div>
<div class="abs lbl" style="left:287.80px;top:116px;font-size:13px;color:#1a1a1a;letter-spacing:-0.160px;">Health</div>
<div class="abs lbl" style="left:395.10px;top:116px;font-size:13px;color:#1a1a1a;letter-spacing:-0.178px;">Error Scan</div>
<div class="abs lbl" style="left:526.40px;top:116px;font-size:13px;color:#1a1a1a;letter-spacing:-0.155px;">Folder Usage</div>
<div class="abs lbl" style="left:673.90px;top:116px;font-size:13px;color:#1a1a1a;letter-spacing:-0.600px;">Erase</div>
<div class="abs lbl" style="left:776.80px;top:114px;font-size:13px;color:#1a1a1a;letter-spacing:-0.269px;">File Benchmark</div>
<div class="abs lbl" style="left:66.00px;top:153px;font-size:13px;color:#1a1a1a;letter-spacing:0.000px;">Transfer speed</div>
<div class="abs lbl" style="left:288.00px;top:348px;font-size:13px;color:#1a1a1a;letter-spacing:-0.233px;">Read</div>
<div class="abs lbl" style="left:388.40px;top:348px;font-size:13px;color:#1a1a1a;letter-spacing:-0.150px;">Write</div>
<div class="abs lbl" style="left:49.20px;top:373px;font-size:13px;color:#1a1a1a;letter-spacing:-0.144px;">Sequential</div>
<div class="abs lbl" style="left:48.20px;top:398px;font-size:13px;color:#1a1a1a;letter-spacing:0.010px;">4 KB random</div>
<div class="abs lbl" style="left:48.20px;top:424px;font-size:13px;color:#1a1a1a;letter-spacing:0.010px;">4 KB random</div>
<div class="abs lbl" style="left:65.00px;top:466px;font-size:13px;color:#1a1a1a;letter-spacing:-0.095px;">Block size measurement</div>
<div class="abs lbl" style="left:818.70px;top:157px;font-size:13px;color:#1a1a1a;letter-spacing:0.050px;">Start</div>
<div class="abs lbl" style="left:789.20px;top:188px;font-size:13px;color:#1a1a1a;letter-spacing:-0.050px;">Drive</div>
<div class="abs lbl" style="left:793.20px;top:216px;font-size:13px;color:#1a1a1a;letter-spacing:0.000px;">K:</div>
<div class="abs lbl" style="left:789.40px;top:247px;font-size:13px;color:#1a1a1a;letter-spacing:-0.600px;">File</div>
<div class="abs lbl" style="left:853.80px;top:287px;font-size:13px;color:#1a1a1a;letter-spacing:0.350px;">MB</div>
<div class="abs lbl" style="left:789.00px;top:326px;font-size:13px;color:#1a1a1a;letter-spacing:-0.533px;">Data</div>
<div class="abs lbl" style="left:793.30px;top:356px;font-size:13px;color:#1a1a1a;letter-spacing:0.250px;">Mixed</div>
<div class="abs lbl" style="left:790.20px;top:478px;font-size:13px;color:#1a1a1a;letter-spacing:-0.600px;">File</div>
<div class="abs lbl" style="left:792.60px;top:509px;font-size:13px;color:#1a1a1a;letter-spacing:0.175px;">64 MB</div>
<div class="abs lbl" style="left:790.20px;top:547px;font-size:13px;color:#1a1a1a;letter-spacing:-0.225px;">Delay</div>
<div class="abs lbl" style="left:795.00px;top:575px;font-size:13px;color:#1a1a1a;letter-spacing:0.000px;">0</div>
<div class="abs lbl" style="left:179.90px;top:420px;font-size:13px;color:#1a1a1a;letter-spacing:0.100px;">32</div>
<div class="abs lbl" style="left:758.90px;top:63px;font-size:12px;color:#000;letter-spacing:-1.233px;font-family:'Liberation Mono',monospace;">Exit</div>
<div class="abs lbl" style="left:14.30px;top:62px;font-size:12px;color:#000;letter-spacing:-1.277px;font-family:'Liberation Mono',monospace;">Dahua C970 PLUS M.2 2280 NVMe 1TSN08193 (1024 gB)</div>
<div class="abs lbl" style="left:265.60px;top:372px;font-size:12.5px;color:#000;letter-spacing:-0.582px;font-family:'Liberation Mono',monospace;font-weight:bold;">4972790 KB/s</div>
<div class="abs lbl" style="left:285.85px;top:398px;font-size:12.5px;color:#000;letter-spacing:-0.582px;font-family:'Liberation Mono',monospace;font-weight:bold;">9550 IOPS</div>
<div class="abs lbl" style="left:278.44px;top:422px;font-size:12.5px;color:#000;letter-spacing:-0.582px;font-family:'Liberation Mono',monospace;font-weight:bold;">65291 IOPS</div>
<div class="abs lbl" style="left:370.82px;top:372px;font-size:12.5px;color:#000;letter-spacing:-0.582px;font-family:'Liberation Mono',monospace;font-weight:bold;">993917 KB/s</div>
<div class="abs lbl" style="left:377.24px;top:398px;font-size:12.5px;color:#000;letter-spacing:-0.582px;font-family:'Liberation Mono',monospace;font-weight:bold;">20457 IOPS</div>
<div class="abs lbl" style="left:377.24px;top:422px;font-size:12.5px;color:#000;letter-spacing:-0.582px;font-family:'Liberation Mono',monospace;font-weight:bold;">24920 IOPS</div>
<div class="abs" style="left:792px;top:279px;width:44px;height:23px;overflow:hidden"><div class="lbl" style="position:absolute;right:3px;top:2px;font-size:13px;color:#1a1a1a;letter-spacing:0px">200000</div></div>
</body></html>
